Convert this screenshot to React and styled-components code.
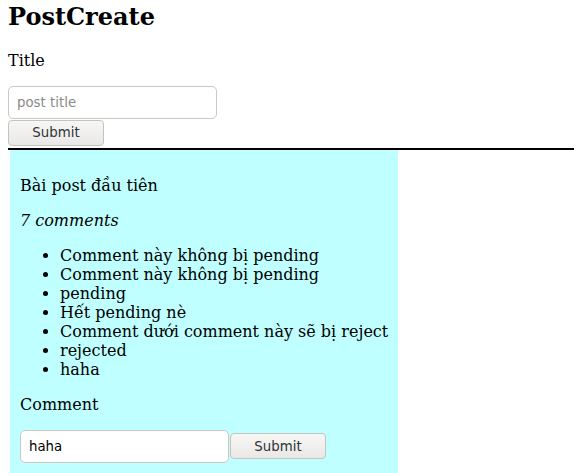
import React from "react";
import styled, { createGlobalStyle } from "styled-components";

const GlobalStyle = createGlobalStyle`
  html, body {
    margin: 0;
    padding: 0;
    background: #ffffff;
    color: #000000;
    font-family: "DejaVu Serif", serif;
    font-size: 16px;
  }
`;

const Page = styled.div`
  padding: 3px 0 0 8px;
`;

const Heading = styled.h1`
  margin: 0 0 0.83em;
  font-size: 24px;
  font-weight: bold;
  line-height: 28px;
`;

const Form = styled.form`
  display: flex;
  flex-direction: ${(p) => (p.$inline ? "row" : "column")};
  align-items: ${(p) => (p.$inline ? "center" : "flex-start")};
  gap: ${(p) => (p.$inline ? "1px" : "0")};
  margin: 0;
`;

const FieldLabel = styled.p`
  margin: 0 0 16px;
  line-height: 19px;
`;

const TextInput = styled.input`
  box-sizing: border-box;
  width: 209px;
  height: 33px;
  margin: 0;
  padding: 0 8px;
  border: 1px solid #cdc7c2;
  border-radius: 5px;
  background: #ffffff;
  font-family: "DejaVu Sans", sans-serif;
  font-size: 13.33px;
  color: #000000;
  outline: none;

  &::placeholder {
    color: #8a8a8a;
  }
`;

const SubmitButton = styled.button`
  box-sizing: border-box;
  width: 96px;
  height: 26px;
  margin: ${(p) => (p.$stacked ? "1px 0 0" : "0")};
  padding: 0;
  border: 1px solid #c6c2bd;
  border-radius: 4px;
  background: linear-gradient(#f7f7f6, #e9e8e6);
  font-family: "DejaVu Sans", sans-serif;
  font-size: 13.33px;
  color: #2e3436;
  cursor: pointer;
`;

const Divider = styled.div`
  height: 2px;
  margin-top: 2px;
  background: #000000;
`;

const PostList = styled.div`
  display: flex;
  flex-wrap: wrap;
  align-items: flex-start;
  padding-left: 2px;
`;

const PostCard = styled.div`
  box-sizing: border-box;
  width: max-content;
  padding: 10px;
  background: #c0ffff;
`;

const Paragraph = styled.p`
  margin: 16px 0;
  line-height: 19px;
  font-style: ${(p) => (p.$italic ? "italic" : "normal")};
`;

const CommentList = styled.ul`
  margin: 16px 0;
  padding-left: 40px;
  list-style: disc;
`;

const CommentItem = styled.li`
  line-height: 19px;
`;

const comments = [
  "Comment này không bị pending",
  "Comment này không bị pending",
  "pending",
  "Hết pending nè",
  "Comment dưới comment này sẽ bị reject",
  "rejected",
  "haha",
];

export default function App() {
  return (
    <>
      <GlobalStyle />
      <Page>
        <Heading>PostCreate</Heading>
        <Form onSubmit={(e) => e.preventDefault()}>
          <FieldLabel>Title</FieldLabel>
          <TextInput placeholder="post title" />
          <SubmitButton $stacked type="submit">Submit</SubmitButton>
        </Form>
        <Divider />
        <PostList>
          <PostCard>
            <Paragraph>Bài post đầu tiên</Paragraph>
            <Paragraph $italic>{comments.length} comments</Paragraph>
            <CommentList>
              {comments.map((c, i) => (
                <CommentItem key={i}>{c}</CommentItem>
              ))}
            </CommentList>
            <Paragraph>Comment</Paragraph>
            <Form $inline onSubmit={(e) => e.preventDefault()}>
              <TextInput defaultValue="haha" />
              <SubmitButton type="submit">Submit</SubmitButton>
            </Form>
          </PostCard>
        </PostList>
      </Page>
    </>
  );
}
